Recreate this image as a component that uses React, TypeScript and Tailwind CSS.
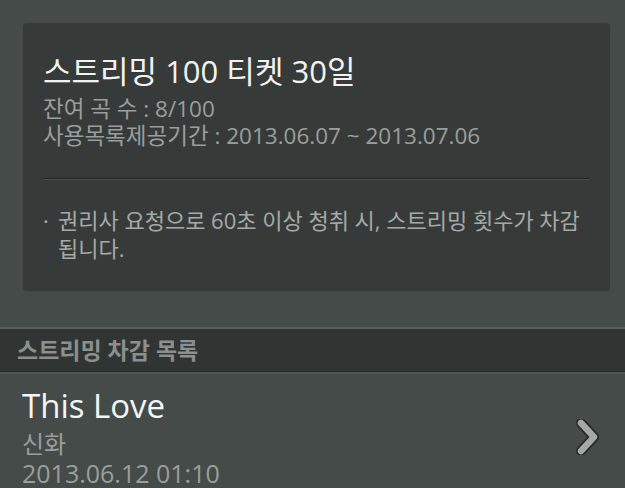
const FONT = { fontFamily: '"Open Sans", "Noto Sans CJK KR", sans-serif' };

function Chevron() {
  return (
    <svg width="26" height="36" viewBox="0 0 26 36" className="shrink-0">
      <path d="M7 4 L20 18 L7 32" fill="none" stroke="#262b29" strokeWidth="10" strokeLinecap="round" strokeLinejoin="round" />
      <path d="M7 4 L20 18 L7 32" fill="none" stroke="#a4a8a6" strokeWidth="6.5" strokeLinecap="round" strokeLinejoin="round" />
    </svg>
  );
}

export default function App() {
  return (
    <div
      className="w-[625px] h-[488px] overflow-hidden bg-[#444b48] flex flex-col"
      style={FONT}
    >
      <div className="pt-[23px] pr-[15px] pb-[37px] pl-[23px]">
        <div className="bg-[#363b39] rounded-[4px] px-[20px] pt-[30px] pb-[28px] shadow-[0_1px_1px_rgba(0,0,0,0.25)]">
          <h1 className="text-[31px] leading-[36px] text-[#f2f2f2]">
            스트리밍 100 티켓 30일
          </h1>
          <div className="mt-[6px] text-[22.5px] leading-[27px] text-[#9a9e9c]">
            <p>잔여 곡 수 : 8/100</p>
            <p>사용목록제공기간 : 2013.06.07 ~ 2013.07.06</p>
          </div>
          <div className="mt-[29px] border-t border-[#202422] border-b border-b-[#4a504d] h-0" />
          <div className="mt-[26px] flex text-[22px] leading-[28px] text-[#a6a9a7]">
            <span className="w-[15px] shrink-0">·</span>
            <p>권리사 요청으로 60초 이상 청취 시, 스트리밍 횟수가 차감 됩니다.</p>
          </div>
        </div>
      </div>
      <div className="border-t-2 border-[#575e5b] bg-[#303533] h-[48px] flex items-center px-[17px] border-b border-b-[#232725]">
        <span className="text-[23px] font-bold text-[#8b8f8d]">스트리밍 차감 목록</span>
      </div>
      <div className="border-t-2 border-[#4f5653] flex items-center pl-[22px] pr-[25px] pt-[12px]">
        <div className="flex-1">
          <div className="text-[33px] leading-[40px] text-[#f5f5f5]">This Love</div>
          <div className="text-[24px] leading-[30px] text-[#9a9e9c] mt-[3px]">신화</div>
          <div className="text-[25px] leading-[29px] text-[#9a9e9c]">2013.06.12 01:10</div>
        </div>
        <Chevron />
      </div>
    </div>
  );
}
